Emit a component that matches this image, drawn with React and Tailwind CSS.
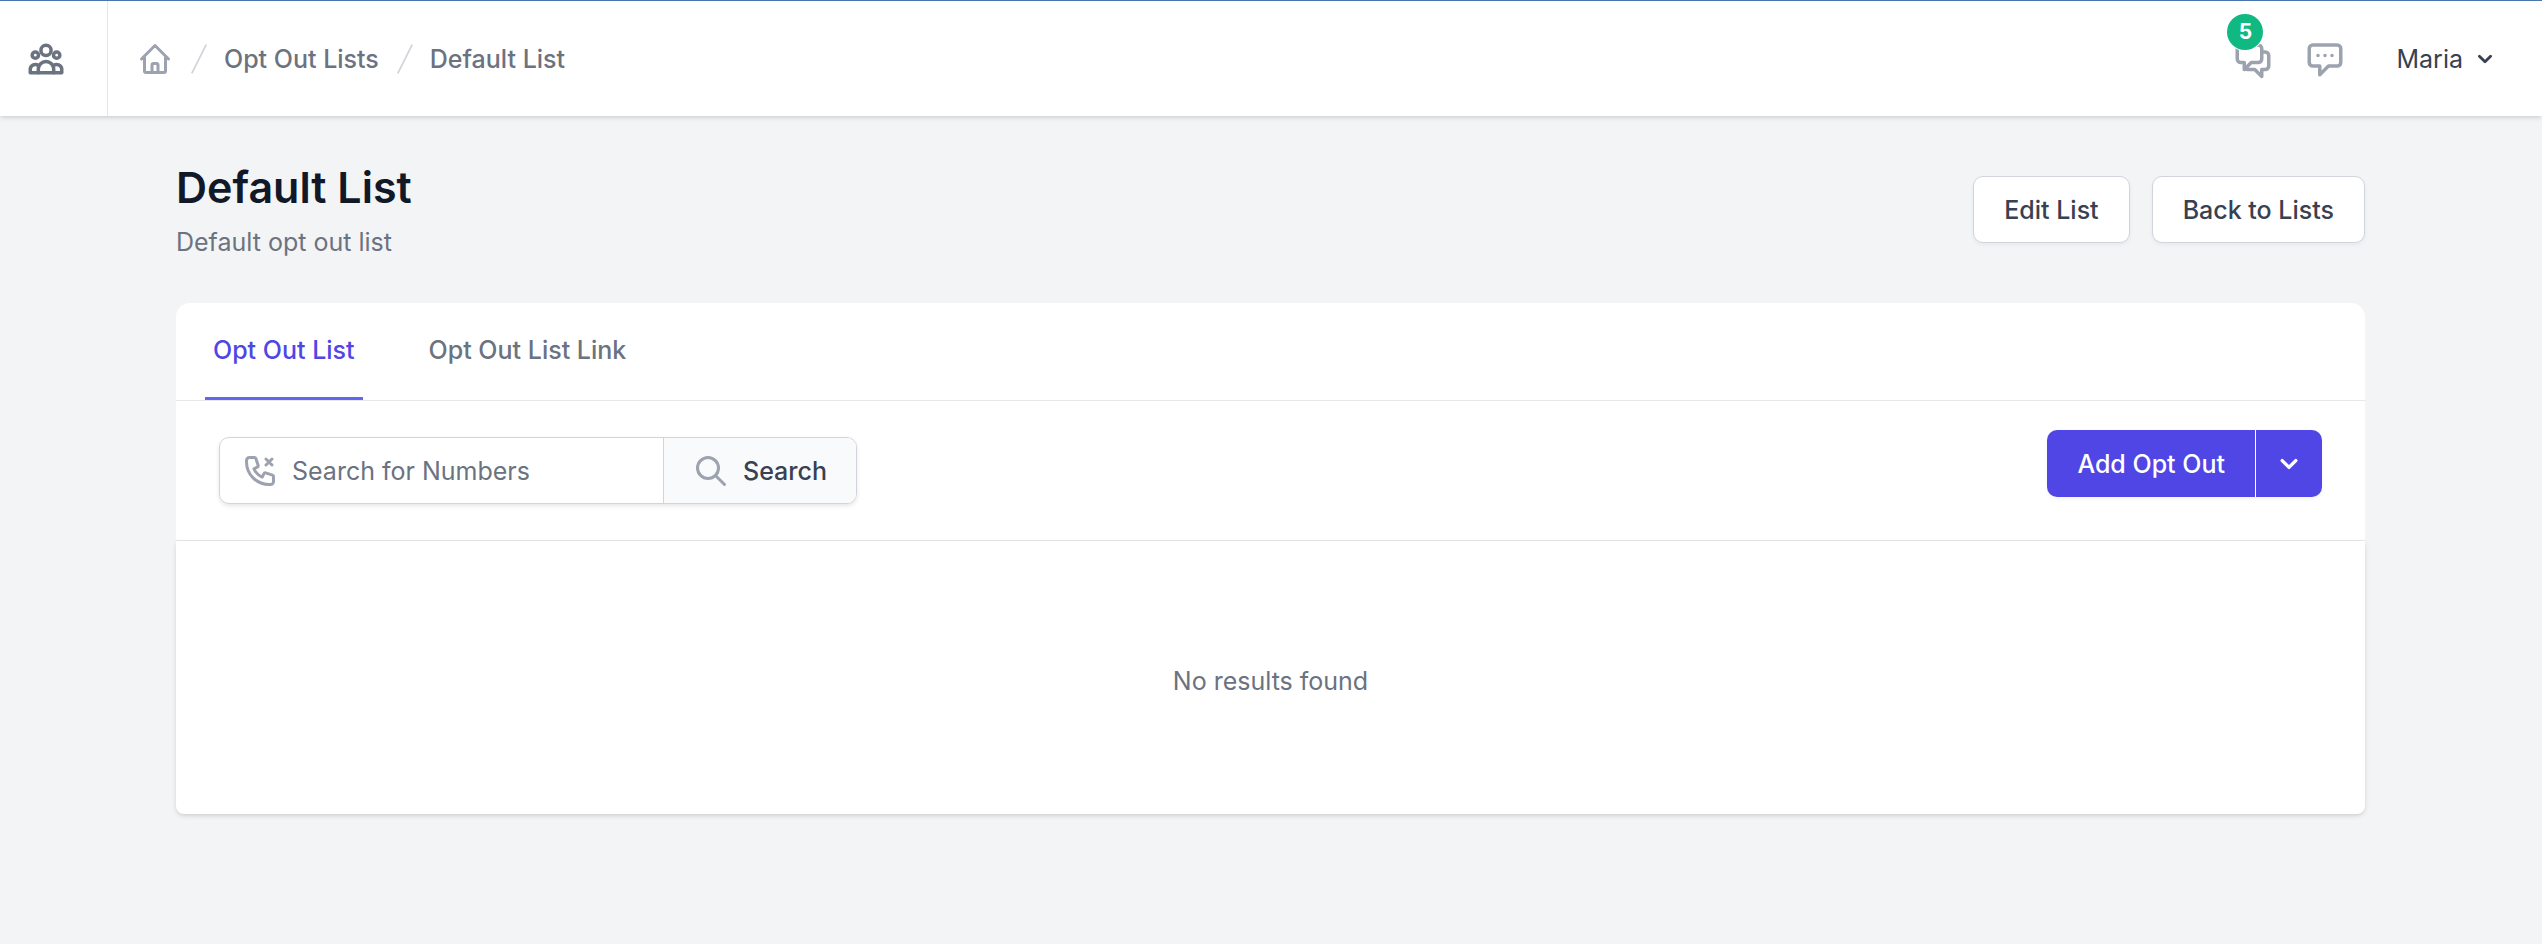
import React from 'react';

const NAV_LINKS = ['Opt Out Lists', 'Default List'];

const StrokeIcon = ({ className, strokeWidth = 2, children }) => (
  <svg
    className={className}
    viewBox="0 0 24 24"
    fill="none"
    stroke="currentColor"
    strokeWidth={strokeWidth}
    strokeLinecap="round"
    strokeLinejoin="round"
    aria-hidden="true"
  >
    {children}
  </svg>
);

const PeopleIcon = ({ className }) => (
  <StrokeIcon className={className}>
    <circle cx="12" cy="7.1" r="2.9" />
    <circle cx="5.9" cy="9.8" r="1.8" />
    <circle cx="18.1" cy="9.8" r="1.8" />
    <path d="M7.6 19.8v-2a4.4 4.4 0 018.8 0v2" />
    <path d="M7.6 15.6A3 3 0 003 17.6v2.2h18v-2.2a3 3 0 00-4.6-2" />
  </StrokeIcon>
);

const HomeIcon = ({ className }) => (
  <StrokeIcon className={className}>
    <path d="M3 12l2-2m0 0l7-7 7 7M5 10v10a1 1 0 001 1h3m10-11l2 2m-2-2v10a1 1 0 01-1 1h-3m-6 0a1 1 0 001-1v-4a1 1 0 011-1h2a1 1 0 011 1v4a1 1 0 001 1m-6 0h6" />
  </StrokeIcon>
);

const Slash = () => (
  <svg className="h-9 w-9 shrink-0 text-[#d1d5db]" viewBox="0 0 20 20" fill="currentColor" aria-hidden="true">
    <path d="M5.555 17.776l8-16 .894.448-8 16-.894-.448z" />
  </svg>
);

const ChevronDown = ({ className }) => (
  <svg className={className} viewBox="0 0 20 20" fill="currentColor" aria-hidden="true">
    <path
      fillRule="evenodd"
      clipRule="evenodd"
      d="M5.293 7.293a1 1 0 011.414 0L10 10.586l3.293-3.293a1 1 0 111.414 1.414l-4 4a1 1 0 01-1.414 0l-4-4a1 1 0 010-1.414z"
    />
  </svg>
);

const Header = () => (
  <header className="flex h-[116px] items-stretch border-t border-[#4a76b0] bg-white shadow-[0_2px_5px_rgba(0,0,0,0.1),0_2px_4px_-2px_rgba(0,0,0,0.1)]">
    <div className="flex w-[108px] shrink-0 items-center border-r border-[#e5e7eb] px-[25px]">
      <button type="button" aria-label="Open sidebar" className="text-[#6b7280]">
        <PeopleIcon className="h-[42px] w-[42px]" />
      </button>
    </div>
    <div className="flex flex-1 items-center justify-between pr-[43px] pl-[29px]">
      <nav aria-label="Breadcrumb" className="flex items-center">
        <a href="#home" aria-label="Home" className="text-[#9ca3af]">
          <HomeIcon className="h-9 w-9" />
        </a>
        {NAV_LINKS.map((label) => (
          <div key={label} className="flex items-center pl-2">
            <Slash />
            <a href="#lists" className="ml-[7px] font-medium text-[#6b7280]">{label}</a>
          </div>
        ))}
      </nav>
      <div className="flex items-center">
        <button type="button" aria-label="Conversations" className="relative text-[#9ca3af]">
          <StrokeIcon className="h-[42px] w-[42px]">
            <path d="M17 8h2a2 2 0 012 2v6a2 2 0 01-2 2h-2v4l-4-4H9a1.994 1.994 0 01-1.414-.586m0 0L11 14h4a2 2 0 002-2V6a2 2 0 00-2-2H5a2 2 0 00-2 2v6a2 2 0 002 2h2v4l.586-.586z" />
          </StrokeIcon>
          <span className="absolute -top-6 -left-[5px] flex h-9 w-9 items-center justify-center rounded-full bg-[#10b981] text-[21px] font-bold text-white ring-1 ring-white">
            5
          </span>
        </button>
        <button type="button" aria-label="Messages" className="ml-[30px] text-[#9ca3af]">
          <StrokeIcon className="h-[42px] w-[42px]">
            <path d="M8 10h.01M12 10h.01M16 10h.01M9 16H5a2 2 0 01-2-2V6a2 2 0 012-2h14a2 2 0 012 2v8a2 2 0 01-2 2h-5l-5 5v-5z" />
          </StrokeIcon>
        </button>
        <button type="button" className="ml-[50px] flex items-center text-[#374151]">
          Maria
          <ChevronDown className="ml-2 h-7 w-7" />
        </button>
      </div>
    </div>
  </header>
);

const WhiteButton = ({ children }) => (
  <button
    type="button"
    className="h-[67px] rounded-[10px] border border-[#d1d5db] bg-white px-[30px] font-medium text-[#374151] shadow-[0_2px_4px_rgba(0,0,0,0.05)]"
  >
    {children}
  </button>
);

const SearchForm = () => (
  <form
    className="mt-[7px] flex h-[67px] rounded-[10px] border border-[#d1d5db] shadow-[0_2px_4px_rgba(0,0,0,0.1)]"
    onSubmit={(e) => e.preventDefault()}
  >
    <div className="flex w-[443px] items-center pl-[22px]">
      <StrokeIcon className="h-9 w-9 shrink-0 text-[#9ca3af]">
        <path d="M16 8l2-2m0 0l2-2m-2 2l-2-2m2 2l2 2M5 3a2 2 0 00-2 2v1c0 8.284 6.716 15 15 15h1a2 2 0 002-2v-3.28a1 1 0 00-.684-.948l-4.493-1.498a1 1 0 00-1.21.502l-1.13 2.257a11.042 11.042 0 01-5.516-5.517l2.257-1.128a1 1 0 00.502-1.21L9.228 3.683A1 1 0 008.279 3H5z" />
      </StrokeIcon>
      <input
        type="text"
        aria-label="Search for Numbers"
        placeholder="Search for Numbers"
        className="ml-[14px] h-full min-w-0 flex-1 bg-transparent placeholder:text-[#6b7280] focus:outline-none"
      />
    </div>
    <button
      type="submit"
      className="flex items-center rounded-r-[9px] border-l border-[#d1d5db] bg-[#f9fafb] px-[29px] font-medium text-[#374151]"
    >
      <StrokeIcon className="mr-[14px] h-9 w-9 text-[#9ca3af]">
        <path d="M21 21l-6-6m2-5a7 7 0 11-14 0 7 7 0 0114 0z" />
      </StrokeIcon>
      Search
    </button>
  </form>
);

const AddOptOut = () => (
  <div className="flex h-[67px] rounded-[10px] bg-[#4f46e5] text-white shadow-[0_2px_4px_rgba(0,0,0,0.05)]">
    <button type="button" className="border-r border-white px-[30px] font-medium">Add Opt Out</button>
    <button type="button" aria-label="More options" className="flex items-center px-4">
      <ChevronDown className="h-[34px] w-[34px]" />
    </button>
  </div>
);

const App = () => (
  <div className="min-h-screen bg-[#f3f4f6] font-['Inter',sans-serif] text-[25px] leading-9">
    <Header />
    <main className="pt-[43px] pr-[177px] pl-44">
      <div className="flex items-center justify-between">
        <div>
          <h1 className="text-[43px] leading-[56px] font-semibold text-[#111827]">Default List</h1>
          <p className="mt-[9px] text-[#6b7280]">Default opt out list</p>
        </div>
        <div className="flex gap-[22px]">
          <WhiteButton>Edit List</WhiteButton>
          <WhiteButton>Back to Lists</WhiteButton>
        </div>
      </div>

      <section className="mt-[43px] rounded-t-[14px] bg-white">
        <nav aria-label="Tabs" className="flex gap-[58px] border-b border-[#e5e7eb] px-[29px]">
          <a href="#list" aria-current="page" className="border-b-[3px] border-[#6366f1] px-2 py-[29px] font-medium text-[#4f46e5]">
            Opt Out List
          </a>
          <a href="#link" className="border-b-[3px] border-transparent px-2 py-[29px] font-medium text-[#6b7280]">
            Opt Out List Link
          </a>
        </nav>
        <div className="flex items-start justify-between border-b border-[#e5e7eb] px-[43px] pt-[29px] pb-9">
          <SearchForm />
          <AddOptOut />
        </div>
      </section>
      <section className="rounded-b-[8px] bg-white px-8 pt-[122px] pb-[115px] text-center text-[#6b7280] shadow-[0_2px_5px_rgba(0,0,0,0.1),0_2px_4px_-2px_rgba(0,0,0,0.1)]">
        No results found
      </section>
    </main>
  </div>
);

export default App;
